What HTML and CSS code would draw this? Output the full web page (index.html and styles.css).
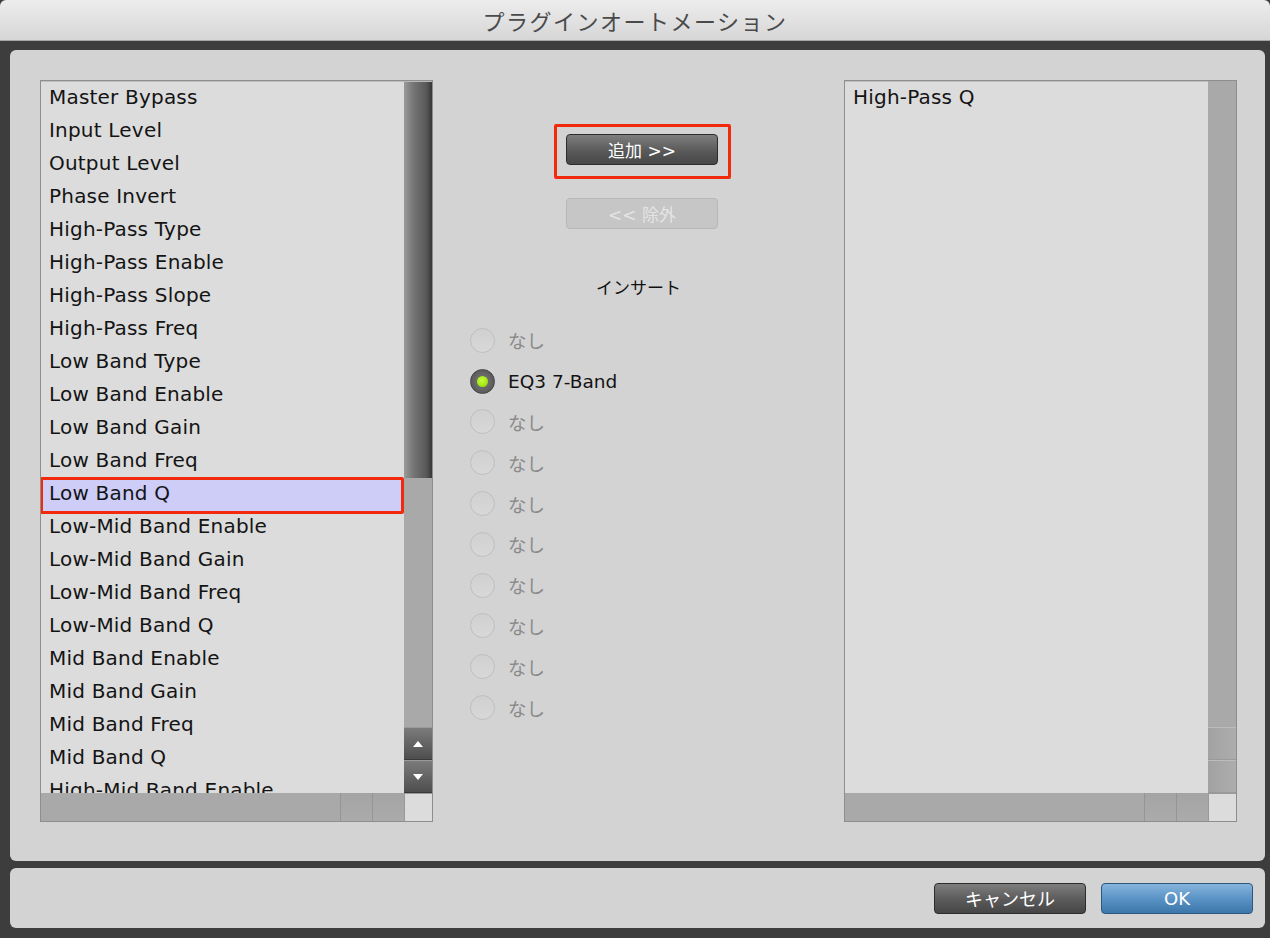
FILE: index.html
```html
<!DOCTYPE html>
<html lang="ja">
<head>
    <meta charset="UTF-8">
    <title>プラグインオートメーション</title>
    <link rel="stylesheet" href="styles.css">
</head>
<body>

    <!-- Window title -->
    <div class="titlebar">プラグインオートメーション</div>

    <!-- Main panel -->
    <div class="panel main-panel">

        <!-- Available parameters -->
        <div class="listbox">
            <div class="list-body">
                <ul class="items">
                    <li>Master Bypass</li>
                    <li>Input Level</li>
                    <li>Output Level</li>
                    <li>Phase Invert</li>
                    <li>High-Pass Type</li>
                    <li>High-Pass Enable</li>
                    <li>High-Pass Slope</li>
                    <li>High-Pass Freq</li>
                    <li>Low Band Type</li>
                    <li>Low Band Enable</li>
                    <li>Low Band Gain</li>
                    <li>Low Band Freq</li>
                    <li class="selected">Low Band Q</li>
                    <li>Low-Mid Band Enable</li>
                    <li>Low-Mid Band Gain</li>
                    <li>Low-Mid Band Freq</li>
                    <li>Low-Mid Band Q</li>
                    <li>Mid Band Enable</li>
                    <li>Mid Band Gain</li>
                    <li>Mid Band Freq</li>
                    <li>Mid Band Q</li>
                    <li>High-Mid Band Enable</li>
                </ul>
                <div class="vscroll">
                    <div class="thumb"></div>
                    <div class="track"></div>
                    <div class="arrow">
                        <svg width="12" height="8" viewBox="0 0 12 8"><path d="M6 1 L11 7 L1 7 Z" fill="#fff"/></svg>
                    </div>
                    <div class="arrow">
                        <svg width="12" height="8" viewBox="0 0 12 8"><path d="M1 1 L11 1 L6 7 Z" fill="#fff"/></svg>
                    </div>
                </div>
            </div>
            <div class="hscroll">
                <div class="htrack"></div>
                <div class="hbtn"></div>
                <div class="hbtn"></div>
                <div class="corner"></div>
            </div>
        </div>

        <!-- Add / remove and insert choice -->
        <div class="middle">
            <div class="mark-box">
                <button class="btn dark">追加 &gt;&gt;</button>
            </div>
            <button class="btn disabled">&lt;&lt; 除外</button>

            <div class="insert-label">インサート</div>

            <div class="radios">
                <div class="radio"><span class="dot"></span>なし</div>
                <div class="radio checked"><span class="dot"></span>EQ3 7-Band</div>
                <div class="radio"><span class="dot"></span>なし</div>
                <div class="radio"><span class="dot"></span>なし</div>
                <div class="radio"><span class="dot"></span>なし</div>
                <div class="radio"><span class="dot"></span>なし</div>
                <div class="radio"><span class="dot"></span>なし</div>
                <div class="radio"><span class="dot"></span>なし</div>
                <div class="radio"><span class="dot"></span>なし</div>
                <div class="radio"><span class="dot"></span>なし</div>
            </div>
        </div>

        <!-- Automated parameters -->
        <div class="listbox">
            <div class="list-body">
                <ul class="items">
                    <li>High-Pass Q</li>
                </ul>
                <div class="vscroll flat">
                    <div class="track"></div>
                    <div class="arrow"></div>
                    <div class="arrow"></div>
                </div>
            </div>
            <div class="hscroll">
                <div class="htrack"></div>
                <div class="hbtn"></div>
                <div class="hbtn"></div>
                <div class="corner"></div>
            </div>
        </div>
    </div>

    <!-- Footer buttons -->
    <div class="panel footer">
        <button class="btn dark">キャンセル</button>
        <button class="btn blue">OK</button>
    </div>

</body>
</html>
```

FILE: styles.css
```css
body {
    margin: 0;
    width: 1270px;
    height: 938px;
    overflow: hidden;
    background-color: #3d3d3d;
    font-family: "DejaVu Sans", "Noto Sans CJK JP", sans-serif;
}

.titlebar {
    height: 40px;
    line-height: 40px;
    text-align: center;
    font-family: "Noto Sans CJK JP", sans-serif;
    font-size: 22px;
    letter-spacing: 1.5px;
    color: #4a4a4a;
    background: linear-gradient(#ededed, #d6d6d6);
    border-bottom: 1px solid #a6a6a6;
    border-radius: 6px 6px 0 0;
}

.panel {
    background-color: #d3d3d3;
    border-radius: 6px;
    margin: 0 5px 0 10px;
}

.main-panel {
    margin-top: 9px;
    height: 781px;
    padding: 30px 0 0 30px;
    display: flex;
    align-items: flex-start;
}

/* List boxes */
.listbox {
    width: 391px;
    height: 740px;
    border: 1px solid #8e8e8e;
    background-color: #dcdcdc;
    display: flex;
    flex-direction: column;
}

.list-body {
    display: flex;
    height: 712px;
}

.items {
    list-style: none;
    margin: 0;
    padding: 0;
    width: 363px;
    height: 712px;
    overflow: hidden;
    border-top: 1px solid #bdbdbd;
    box-sizing: border-box;
}

.items li {
    height: 33px;
    line-height: 30px;
    padding-left: 8px;
    font-size: 20px;
    letter-spacing: 0.2px;
    color: #141414;
    white-space: nowrap;
}

.items li.selected {
    position: relative;
    background-color: #cdcdf8;
}

.items li.selected::after {
    content: "";
    position: absolute;
    left: -1px;
    right: 0;
    top: -1px;
    bottom: -3px;
    border: 3px solid #f3290b;
    border-radius: 2px;
}

.vscroll {
    width: 28px;
    display: flex;
    flex-direction: column;
    background-color: #a9a9a9;
}

.vscroll .thumb {
    height: 397px;
    background: linear-gradient(to right, #9a9a9a, #747474 35%, #585858 80%, #363636);
    border-top: 1px solid #b9b9b9;
    box-sizing: border-box;
}

.vscroll .track {
    flex: 1;
    background-color: #a9a9a9;
}

.vscroll .arrow {
    height: 31px;
    display: flex;
    align-items: center;
    justify-content: center;
    background: linear-gradient(#7b7b7b, #4e4e4e);
    border-top: 1px solid #9a9a9a;
    border-bottom: 1px solid #3a3a3a;
}

.vscroll.flat .arrow {
    background: linear-gradient(to right, #a2a2a2, #adadad);
    border-top: 1px solid #bcbcbc;
    border-bottom: 1px solid #9a9a9a;
}

.hscroll {
    display: flex;
    height: 28px;
    background-color: #a9a9a9;
}

.htrack {
    width: 299px;
}

.hbtn {
    width: 31px;
    border-left: 1px solid #959595;
    background: linear-gradient(#a4a4a4, #ababab);
}

.corner {
    flex: 1;
    background-color: #dcdcdc;
    border-left: 1px solid #999;
    border-top: 1px solid #999;
}

/* Middle column */
.middle {
    width: 411px;
    display: flex;
    flex-direction: column;
    align-items: flex-start;
}

.mark-box {
    margin: 44px 0 0 121px;
    padding: 7px 10px 11px 9px;
    border: 3px solid #f3290b;
    border-radius: 2px;
}

.btn {
    width: 152px;
    height: 31px;
    border-radius: 4px;
    font-family: "DejaVu Sans", "Noto Sans CJK JP", sans-serif;
    font-size: 17px;
    color: #fff;
    padding: 0;
    cursor: pointer;
}

.btn.dark {
    background: linear-gradient(#7e7e7e, #5a5a5a 55%, #464646);
    border: 1px solid #2c2c2c;
}

.btn.disabled {
    margin: 19px 0 0 133px;
    background-color: #c6c6c6;
    border: 1px solid #b7b7b7;
    color: #e4e4e4;
}

.btn.blue {
    background: linear-gradient(#86b5dc, #5a93c5 50%, #3c76aa);
    border: 1px solid #2c5781;
}

.insert-label {
    align-self: stretch;
    text-align: center;
    margin-top: 47px;
    font-family: "Noto Sans CJK JP", sans-serif;
    font-size: 17px;
    line-height: 22px;
    color: #111;
}

.radios {
    margin: 22px 0 0 37px;
}

.radio {
    height: 40.8px;
    display: flex;
    align-items: center;
    gap: 13px;
    font-size: 18.5px;
    color: #8a8a8a;
}

.radio .dot {
    width: 23px;
    height: 23px;
    border-radius: 50%;
    border: 1.5px solid #bfbfbf;
    background: linear-gradient(#d0d0d0, #d8d8d8);
}

.radio.checked {
    color: #141414;
}

.radio.checked .dot {
    position: relative;
    border-color: #444;
    background: radial-gradient(circle, #6a6a6a 40%, #4c4c4c);
}

.radio.checked .dot::after {
    content: "";
    position: absolute;
    left: 6px;
    top: 6px;
    width: 11px;
    height: 11px;
    border-radius: 50%;
    background: radial-gradient(circle at 45% 40%, #c4ff3a, #8fd400);
}

/* Footer */
.footer {
    margin-top: 7px;
    height: 60px;
    display: flex;
    align-items: center;
    justify-content: flex-end;
    gap: 15px;
    padding-right: 12px;
}

.footer .btn {
    font-size: 18px;
}
```
